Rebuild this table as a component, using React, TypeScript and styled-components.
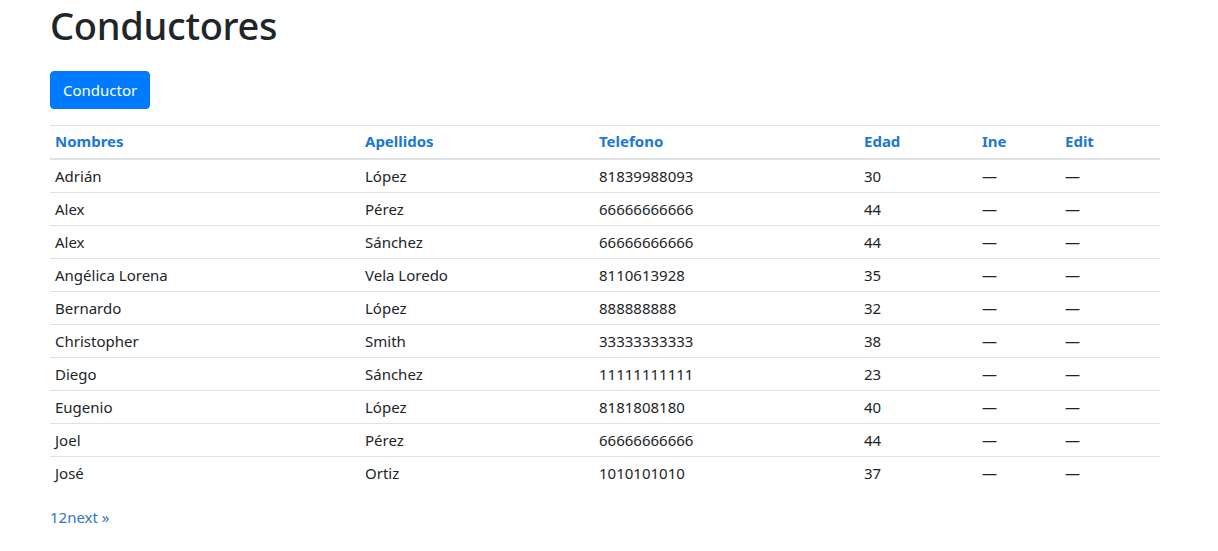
import React from "react";
import styled, { createGlobalStyle } from "styled-components";

const Global = createGlobalStyle`
  * { box-sizing: border-box; }
  body {
    margin: 0;
    background: #fff;
    color: #212529;
    font-family: "Noto Sans", "Open Sans", sans-serif;
    font-size: 15px;
    line-height: 1.5;
  }
`;

const Page = styled.div`
  padding-left: 50px;
  width: 1160px;
`;

const Title = styled.h1`
  margin: 0 0 21px;
  font-size: 38px;
  font-weight: 500;
  line-height: 50px;
  letter-spacing: -0.3px;
  color: #212529;
`;

const Button = styled.button`
  display: block;
  height: 38px;
  padding: 0 12px;
  margin-bottom: 16px;
  border: 1px solid #007bff;
  border-radius: 4px;
  background: #007bff;
  color: #fff;
  font-family: inherit;
  font-size: 15px;
  cursor: pointer;
`;

const Table = styled.table`
  width: 1110px;
  border-collapse: collapse;
  table-layout: fixed;
  margin-bottom: 16px;
`;

const Th = styled.th`
  text-align: left;
  padding: 3px 5px 4px;
  height: 33px;
  border-top: 1px solid #dee2e6;
  border-bottom: 2px solid #dee2e6;
  font-weight: 700;
  line-height: 24px;
`;

const HeadLink = styled.a`
  color: #1a78d6;
  text-decoration: none;
`;

const Td = styled.td`
  padding: 4px 5px;
  height: 33px;
  border-top: 1px solid #dee2e6;
  line-height: 24px;
`;

const Pager = styled.div`
  font-size: 15px;
  line-height: 24px;
`;

const PageLink = styled.a`
  color: #2f78c4;
  text-decoration: none;
`;

const cols = [
  { label: "Nombres", w: 310 },
  { label: "Apellidos", w: 234 },
  { label: "Telefono", w: 265 },
  { label: "Edad", w: 118 },
  { label: "Ine", w: 83 },
  { label: "Edit", w: 100 },
];

const rows: [string, string, string, string][] = [
  ["Adrián", "López", "81839988093", "30"],
  ["Alex", "Pérez", "66666666666", "44"],
  ["Alex", "Sánchez", "66666666666", "44"],
  ["Angélica Lorena", "Vela Loredo", "8110613928", "35"],
  ["Bernardo", "López", "888888888", "32"],
  ["Christopher", "Smith", "33333333333", "38"],
  ["Diego", "Sánchez", "11111111111", "23"],
  ["Eugenio", "López", "8181808180", "40"],
  ["Joel", "Pérez", "66666666666", "44"],
  ["José", "Ortiz", "1010101010", "37"],
];

export default function App() {
  return (
    <Page>
      <Global />
      <Title>Conductores</Title>
      <Button>Conductor</Button>
      <Table>
        <colgroup>
          {cols.map((c) => (
            <col key={c.label} style={{ width: c.w }} />
          ))}
        </colgroup>
        <thead>
          <tr>
            {cols.map((c) => (
              <Th key={c.label}>
                <HeadLink href="#">{c.label}</HeadLink>
              </Th>
            ))}
          </tr>
        </thead>
        <tbody>
          {rows.map((r, i) => (
            <tr key={i}>
              <Td>{r[0]}</Td>
              <Td>{r[1]}</Td>
              <Td>{r[2]}</Td>
              <Td>{r[3]}</Td>
              <Td>—</Td>
              <Td>—</Td>
            </tr>
          ))}
        </tbody>
      </Table>
      <Pager>
        <PageLink href="#">1</PageLink>
        <PageLink href="#">2</PageLink>
        <PageLink href="#">next »</PageLink>
      </Pager>
    </Page>
  );
}
